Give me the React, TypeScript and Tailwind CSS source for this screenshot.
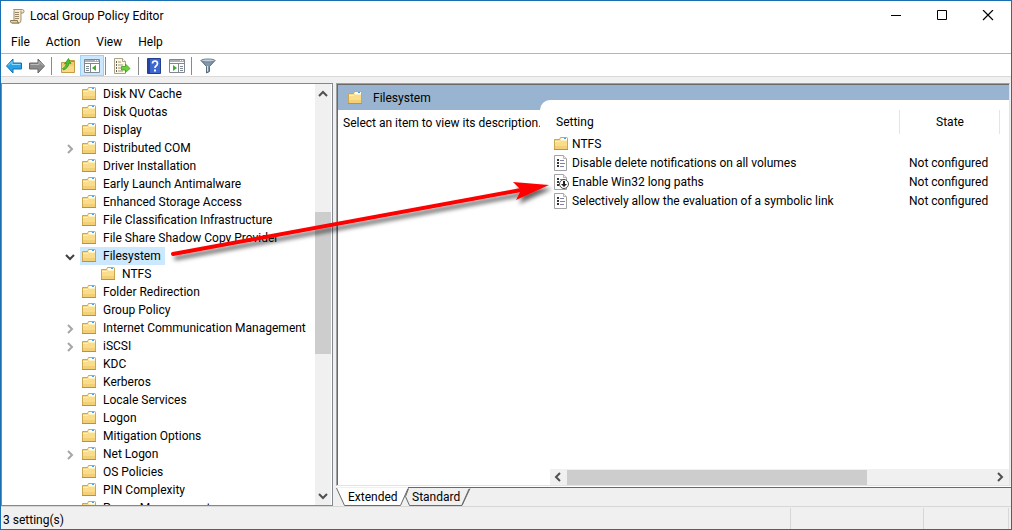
import { useState } from "react";

type TreeItem = {
  name: string;
  level?: number;
  expand?: "open" | "closed";
};

const treeItems: TreeItem[] = [
  { name: "Disk NV Cache" },
  { name: "Disk Quotas" },
  { name: "Display" },
  { name: "Distributed COM", expand: "closed" },
  { name: "Driver Installation" },
  { name: "Early Launch Antimalware" },
  { name: "Enhanced Storage Access" },
  { name: "File Classification Infrastructure" },
  { name: "File Share Shadow Copy Provider" },
  { name: "Filesystem", expand: "open" },
  { name: "NTFS", level: 1 },
  { name: "Folder Redirection" },
  { name: "Group Policy" },
  { name: "Internet Communication Management", expand: "closed" },
  { name: "iSCSI", expand: "closed" },
  { name: "KDC" },
  { name: "Kerberos" },
  { name: "Locale Services" },
  { name: "Logon" },
  { name: "Mitigation Options" },
  { name: "Net Logon", expand: "closed" },
  { name: "OS Policies" },
  { name: "PIN Complexity" },
  { name: "Power Management" },
];

const settings = [
  { name: "NTFS", icon: "folder", state: "" },
  { name: "Disable delete notifications on all volumes", icon: "policy", state: "Not configured" },
  { name: "Enable Win32 long paths", icon: "pending", state: "Not configured" },
  { name: "Selectively allow the evaluation of a symbolic link", icon: "policy", state: "Not configured" },
];

function FolderIcon() {
  return (
    <svg width="16" height="16" viewBox="0 0 16 16" className="shrink-0">
      <path d="M1.500 3.500h5l1-2h6q1 0 1 1v11h-13z" fill="#f3d88e" stroke="#cda650" />
      <path d="M8 2h6v2H7z" fill="#fffdf4" />
      <path d="M11 2h2v1h-2z" fill="#4a9be8" />
      <path d="M2 6h5l1-1h6v8H2z" fill="#f9dd8d" />
      <path d="M2 10h12v3H2z" fill="#f3cf78" />
      <path d="M2 5.500h5l1-1h6" fill="none" stroke="#fff1bd" />
      <path d="M1 13.500h14" stroke="#bd9140" />
    </svg>
  );
}

function PolicyIcon({ pending }: { pending?: boolean }) {
  return (
    <svg width="16" height="16" viewBox="0 0 16 16" className="shrink-0">
      <path d="M1.500.5h9l3 3v12h-12z" fill="#fff" stroke="#a3a3a3" />
      <path d="M10.500.5v3h3" fill="#eee" stroke="#b5b5b5" />
      <path d="M4 4h2v2H4zM4 7h2v2H4zM4 10h2v2H4z" fill="#333" />
      <path d="M7 5.500h4M7 8.500h5M7 11.500h4" stroke="#8580a5" />
      {pending && (
        <>
          <circle cx="11" cy="10" r="4.500" fill="#fff" stroke="#4a4a4a" />
          <path d="M10 7h2v3h2l-3 3-3-3h2z" fill="#222" />
        </>
      )}
    </svg>
  );
}

function ScrollIcon() {
  return (
    <svg width="16" height="16" viewBox="0 0 16 16">
      <path d="M4.500 1.500h9q1.500 0 1.500 2t-2 1.500h-1v7q0 3-2 3h-7q2-1 2-3v-8q0-2 1-2.500z" fill="#f4ecd2" stroke="#a1906a" />
      <path d="M12 5V2.500" stroke="#a1906a" />
      <path d="M1.500 12.500h7q-.5 2.500 1.500 2.500H2.500q-1.500-1-1-2.500z" fill="#e2d4a8" stroke="#8d7a50" />
      <path d="M6 4.500h4M6 6.500h4M6 8.500h4M6 10.500h4" stroke="#998a6a" />
    </svg>
  );
}

function ArrowIcon({ forward }: { forward?: boolean }) {
  return forward ? (
    <svg width="16" height="16" viewBox="0 0 16 16">
      <path d="M15.500 8 9 1v4H.5v6H9v4z" fill="#8b8b8b" stroke="#666" />
      <path d="M1.500 6.500H10V3.500L14 7.500" fill="none" stroke="#bcbcbc" />
    </svg>
  ) : (
    <svg width="16" height="16" viewBox="0 0 16 16">
      <path d="M.5 8 7 1v4h8.500v6H7v4z" fill="#27a3e8" stroke="#1870ae" />
      <path d="M2 7.500 6 3.500v3h8.500" fill="none" stroke="#8bdcff" />
    </svg>
  );
}

function UpIcon() {
  return (
    <svg width="16" height="16" viewBox="0 0 16 16">
      <path d="M1.500 4.500h6l1-2h6v12h-13z" fill="#f1cc72" stroke="#c59b45" />
      <path d="M2 8h12v6H2z" fill="#f8d98a" />
      <path d="M11 3h3v1h-3z" fill="#4a9be8" />
      <path d="M2.500 10.500Q6 9 6.500 5.500l-2 .5L8.500.5l2.500 5-2-.5Q8.500 10 3.500 12z" fill="#4cc02c" stroke="#2f8c1b" strokeWidth=".7" />
    </svg>
  );
}

function PaneIcon({ right }: { right?: boolean }) {
  return (
    <svg width="16" height="16" viewBox="0 0 16 16">
      <path d="M.5 1.500h15v13H.5z" fill="#fff" stroke="#7f8790" />
      <path d="M1 2h14v2H1z" fill="#a8b1ba" />
      <path d="M11 2.500h1M13 2.500h1" stroke="#fff" />
      <path d="M1 5.500h14" stroke="#7f8790" />
      {right ? (
        <>
          <path d="M9.500 6v8" stroke="#7f8790" />
          <path d="M11 8.500h3M11 10.500h3M11 12.500h3" stroke="#7f8790" />
          <path d="M4 7v6l4-3z" fill="#3fae2a" />
        </>
      ) : (
        <>
          <path d="M6.500 6v8" stroke="#7f8790" />
          <path d="M2 8.500h3M2 10.500h3M2 12.500h3" stroke="#7f8790" />
          <path d="M12 7v6l-4-3z" fill="#3fae2a" />
        </>
      )}
    </svg>
  );
}

function ExportIcon() {
  return (
    <svg width="18" height="16" viewBox="0 0 18 16">
      <path d="M1.500.5h8l3 3v12h-11z" fill="#fdf8df" stroke="#aaa38a" />
      <path d="M9.500.5v3h3" fill="#fff" stroke="#aaa38a" />
      <path d="M3 4h1M3 7h1M3 10h1M3 13h1" stroke="#333" strokeWidth="1.500" />
      <path d="M5 4h3M5 7h5M5 10h3M5 13h5" stroke="#99998a" />
      <path d="M8.500 8.500h4V6l4.500 4.500-4.500 4v-2.500h-4z" fill="#68d13b" stroke="#3d9d22" strokeWidth=".8" />
    </svg>
  );
}

function HelpIcon() {
  return (
    <svg width="14" height="16" viewBox="0 0 14 16">
      <path d="M.5.5h13v15H.5z" fill="#3f68cf" stroke="#23408f" />
      <path d="M1 1h2v14H1z" fill="#23459f" />
      <path d="M5.500 5.500Q5.500 3 8 3t2.500 2.500Q10.500 7 9 8q-1 .7-1 2" fill="none" stroke="#fff" strokeWidth="1.700" />
      <path d="M7 11.500h2v2H7z" fill="#fff" />
    </svg>
  );
}

function FilterIcon() {
  return (
    <svg width="16" height="16" viewBox="0 0 16 16">
      <path d="M1 2.500 6.500 8.500V15l3-1.500v-5L15 2.500z" fill="#8197aa" stroke="#566b7d" />
      <path d="M7.500 8V13.500" stroke="#d2dee8" />
      <ellipse cx="8" cy="2.500" rx="7" ry="1.500" fill="#c3d0db" stroke="#6c8091" />
    </svg>
  );
}

const chevronPaths = {
  up: "M4 10l4-4 4 4",
  down: "M4 6l4 4 4-4",
  left: "M10 4 6 8l4 4",
  right: "M6 4l4 4-4 4",
};

function Chevron({ dir, className }: { dir: keyof typeof chevronPaths; className?: string }) {
  return (
    <svg width="16" height="16" viewBox="0 0 16 16" className={className}>
      <path d={chevronPaths[dir]} fill="none" stroke="currentColor" strokeWidth="2" />
    </svg>
  );
}

function Separator() {
  return <div className="h-[18px] w-px bg-[#8a8a8a]" />;
}

function Tree({ selected, onSelect }: { selected: string; onSelect: (name: string) => void }) {
  return (
    <div className="flex w-[332px] shrink-0 border border-[#828790] bg-white">
      <ul className="min-w-0 flex-1 overflow-hidden pt-px">
        {treeItems.map((item) => {
          const active = item.name === selected && !item.level;
          return (
            <li key={item.name} className={`flex h-[18px] items-center ${item.level ? "pl-[79px]" : "pl-[60px]"}`}>
              <span className="w-[18px] shrink-0 pt-0.5">
                {item.expand && (
                  <button aria-label={`Toggle ${item.name}`} className="block">
                    {item.expand === "open" ? (
                      <Chevron dir="down" className="text-[#404040]" />
                    ) : (
                      <Chevron dir="right" className="text-[#a6a6a6]" />
                    )}
                  </button>
                )}
              </span>
              <button
                onClick={() => onSelect(item.name)}
                className={`flex h-[18px] items-center gap-1.5 whitespace-nowrap pl-px pr-1 ${active ? "bg-[#cce8ff]" : ""}`}
              >
                <FolderIcon />
                {item.name}
              </button>
            </li>
          );
        })}
      </ul>
      <div className="mr-px flex w-4 flex-col bg-[#f0f0f0] text-[#505050]">
        <button aria-label="Scroll up" className="pt-0.5">
          <Chevron dir="up" />
        </button>
        <div className="flex flex-1 flex-col">
          <div className="flex-[110]" />
          <div className="flex-[141] bg-[#cdcdcd]" />
          <div className="flex-[134]" />
        </div>
        <button aria-label="Scroll down" className="pb-px">
          <Chevron dir="down" />
        </button>
      </div>
    </div>
  );
}

function SettingsTable() {
  return (
    <table className="w-full table-fixed border-collapse text-left">
      <colgroup>
        <col />
        <col className="w-[100px]" />
        <col className="w-[10px]" />
      </colgroup>
      <thead>
        <tr className="h-6">
          <th className="pl-4 font-normal">Setting</th>
          <th className="border-x border-[#e5e5e5] p-0 pl-0.5 text-center font-normal">State</th>
          <td />
        </tr>
      </thead>
      <tbody>
        {settings.map((row) => (
          <tr key={row.name} className="h-[19px]">
            <td className="p-0 pl-[13px]">
              <div className="flex items-center gap-[3px] whitespace-nowrap">
                {row.icon === "folder" ? <FolderIcon /> : <PolicyIcon pending={row.icon === "pending"} />}
                {row.name}
              </div>
            </td>
            <td className="whitespace-nowrap p-0 pl-2.5">{row.state}</td>
            <td />
          </tr>
        ))}
      </tbody>
    </table>
  );
}

function ViewTabs() {
  return (
    <div className="relative h-[18px] shrink-0">
      <svg width="136" height="19" viewBox="0 0 136 19" className="absolute left-0 top-0">
        <path d="M72.500.5h62l-8 17h-53l-4-9z" fill="#f0f0f0" />
        <path d="M134 .5l-8 17H73.500l-4-9 3-8" fill="none" stroke="#696969" />
        <path d="M133 1l-7 16" fill="none" stroke="#696969" />
        <path d="M0 0h72l-8 17.500H8.500z" fill="#fff" />
        <path d="M.5 0l8 17.500h56l7.500-17" fill="none" stroke="#696969" />
      </svg>
      <div role="tablist" className="relative flex h-full pl-3">
        <button role="tab" aria-selected="true" className="w-16 text-left">
          Extended
        </button>
        <button role="tab" aria-selected="false" className="text-left">
          Standard
        </button>
      </div>
    </div>
  );
}

export default function App() {
  const [selected, setSelected] = useState("Filesystem");

  return (
    <div className="relative flex h-screen flex-col overflow-hidden border border-[#1a6fb3] bg-[#f0f0f0] font-['Roboto','Open_Sans',sans-serif] text-[12px] leading-4 text-black">
      <header className="shrink-0 bg-white">
        <div className="flex h-[30px] items-center pl-2">
          <ScrollIcon />
          <h1 className="flex-1 pl-[5px]">Local Group Policy Editor</h1>
          <button aria-label="Minimize" className="flex w-[46px] justify-center">
            <svg width="12" height="12" viewBox="0 0 12 12">
              <path d="M1 5.500h10" stroke="#000" />
            </svg>
          </button>
          <button aria-label="Maximize" className="flex w-[46px] justify-center">
            <svg width="12" height="12" viewBox="0 0 12 12">
              <path d="M1.500.5h9v9h-9z" fill="none" stroke="#000" />
            </svg>
          </button>
          <button aria-label="Close" className="flex w-[46px] justify-center">
            <svg width="12" height="12" viewBox="0 0 12 12">
              <path d="M1 0l10 10M11 0 1 10" stroke="#000" strokeWidth="1.200" />
            </svg>
          </button>
        </div>
        <nav className="flex h-[22px] items-center gap-4 pl-2.5">
          <button>File</button>
          <button>Action</button>
          <button>View</button>
          <button>Help</button>
        </nav>
        <div className="flex h-6 items-center border-b border-t border-b-[#dadada] border-t-[#b1b5bd] pl-[5px] pt-px">
          <button aria-label="Back">
            <ArrowIcon />
          </button>
          <button aria-label="Forward" className="pl-[7px] pr-1.5">
            <ArrowIcon forward />
          </button>
          <Separator />
          <button aria-label="Up one level" className="pl-2 pr-1">
            <UpIcon />
          </button>
          <button
            aria-label="Show or hide console tree"
            className="flex h-[21px] w-6 items-center justify-center border border-[#99d1ff] bg-[#cce8ff]"
          >
            <PaneIcon />
          </button>
          <div className="w-px" />
          <Separator />
          <button aria-label="Export list" className="px-[7px]">
            <ExportIcon />
          </button>
          <Separator />
          <button aria-label="Help" className="px-2">
            <HelpIcon />
          </button>
          <button aria-label="Show or hide action pane" className="pr-1.5">
            <PaneIcon right />
          </button>
          <Separator />
          <button aria-label="Filter" className="pl-2">
            <FilterIcon />
          </button>
        </div>
      </header>

      <main className="flex min-h-0 flex-1 gap-[3px] pt-1.5">
        <Tree selected={selected} onSelect={setSelected} />

        <section className="flex min-w-0 flex-1 flex-col">
          <div className="mr-px flex min-h-0 flex-1 flex-col border-b border-l border-r border-t border-b-[#e3e3e3] border-l-[#a0a0a0] border-r-[#e3e3e3] border-t-[#a0a0a0]">
            <div className="flex min-h-0 flex-1 border-l border-t border-[#696969] bg-[#99b4d1]">
              <div className="flex w-[202px] shrink-0 flex-col">
                <div className="flex h-[25px] items-center gap-2.5 pl-[9px]">
                  <FolderIcon />
                  <h2>{selected}</h2>
                </div>
                <p className="flex-1 whitespace-nowrap bg-white pl-[5px] pt-[5px]">Select an item to view its description.</p>
              </div>
              <div className="flex min-w-0 flex-1 flex-col pt-[15px]">
                <div className="h-2.5 rounded-tl-[10px] bg-white" />
                <div className="min-h-0 flex-1 bg-white">
                  <SettingsTable />
                </div>
                <div className="bg-white pl-2.5">
                  <div className="flex h-4 items-center bg-[#f0f0f0] text-[#505050]">
                    <button aria-label="Scroll left" className="w-[17px]">
                      <Chevron dir="left" />
                    </button>
                    <div className="flex h-[15px] flex-1">
                      <div className="flex-[300] bg-[#cdcdcd]" />
                      <div className="flex-[125]" />
                    </div>
                    <button aria-label="Scroll right" className="w-[17px]">
                      <Chevron dir="right" />
                    </button>
                  </div>
                </div>
              </div>
            </div>
          </div>
          <div className="h-px shrink-0 bg-white" />
          <div className="ml-[72px] h-px shrink-0 bg-[#696969]" />
          <ViewTabs />
        </section>
      </main>

      <footer className="flex h-[23px] shrink-0 border-t border-[#d7d7d7] pt-px">
        <span className="flex-1 pl-0.5 pt-1">3 setting(s)</span>
        <span className="w-[133px] border-l border-[#d7d7d7]" />
        <span className="mr-0.5 w-[86px] border-x border-[#d7d7d7]" />
      </footer>

      {/* pointer from the tree node to the policy */}
      <svg width="400" height="100" viewBox="0 0 400 100" className="pointer-events-none absolute left-[164px] top-[169px]">
        <defs>
          <filter id="arrow-shadow" x="-10%" y="-20%" width="120%" height="150%">
            <feDropShadow dx="3" dy="4" stdDeviation="2" floodColor="#000" floodOpacity="0.6" />
          </filter>
        </defs>
        <g filter="url(#arrow-shadow)" fill="#f00">
          <path d="M8 84 L356 20" stroke="#f00" strokeWidth="4" strokeLinecap="round" />
          <path d="M384 15 L348 12 L356 20 L351 30 Z" />
        </g>
      </svg>
    </div>
  );
}
